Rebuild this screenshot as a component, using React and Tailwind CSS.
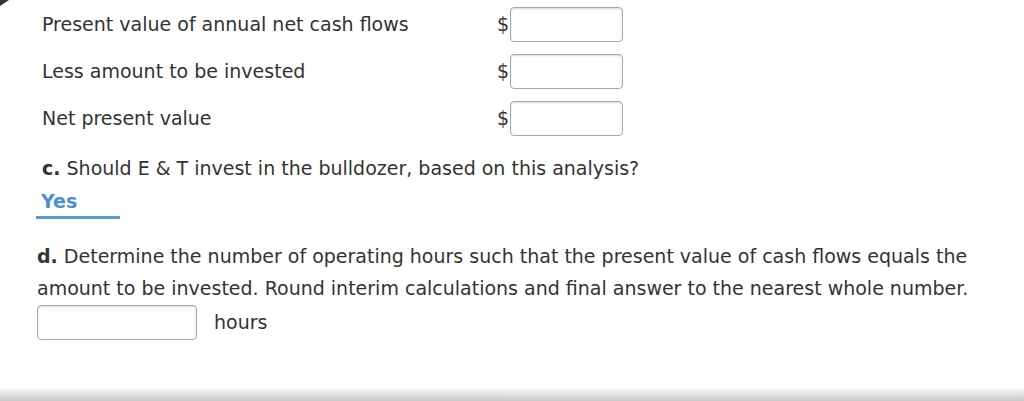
const rows = [
  "Present value of annual net cash flows",
  "Less amount to be invested",
  "Net present value",
];

const inputCls =
  "h-[35px] rounded-[4px] border border-[#a9a9a9] bg-white shadow-[inset_0_1px_2px_rgba(0,0,0,0.15)]";

export default function App() {
  return (
    <div
      className="relative h-[401px] w-[1024px] overflow-hidden bg-white text-[19px] text-[#333]"
      style={{ fontFamily: '"DejaVu Sans", Verdana, sans-serif' }}
    >
      {/* corner of the panel above */}
      <div className="absolute left-0 top-0 h-0 w-0 border-l-[9px] border-b-[6px] border-l-[#333] border-b-transparent" />

      <div className="flex flex-col gap-[12px] pl-[42px] pt-[7px]">
        {rows.map((label) => (
          <div key={label} className="flex h-[35px] items-center">
            <div className="w-[455px]">{label}</div>
            <span className="w-[13px]">$</span>
            <div className={`${inputCls} w-[113px]`} />
          </div>
        ))}
      </div>

      <div className="pl-[42px] pt-[20px] leading-[24px]">
        <b>c.</b> Should E &amp; T invest in the bulldozer, based on this analysis?
      </div>
      <div className="ml-[36px] mt-[10px] w-[84px] border-b-[3px] border-[#5a9bd4] pb-[4px] pl-[5px] font-bold leading-[22px] text-[#4d8fcc]">
        Yes
      </div>

      <div className="pl-[37px] pt-[21px] leading-[32px]">
        <b>d.</b> Determine the number of operating hours such that the present value of cash flows equals the
        <br />
        amount to be invested. Round interim calculations and final answer to the nearest whole number.
      </div>
      <div className="flex items-center pl-[37px] pt-[1px]">
        <div className={`${inputCls} w-[160px]`} />
        <span className="ml-[17px]">hours</span>
      </div>

      <div className="absolute bottom-0 left-0 h-[14px] w-full bg-gradient-to-b from-white to-[#c8c8c8]" />
    </div>
  );
}
